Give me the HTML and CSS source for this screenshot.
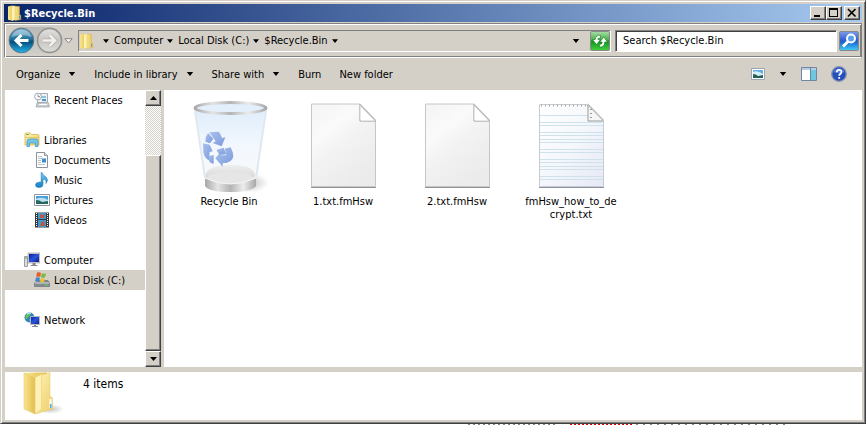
FILE: index.html
```
<!DOCTYPE html>
<html lang="en">
<head>
<meta charset="utf-8">
<title>$Recycle.Bin</title>
<link rel="stylesheet" href="styles.css">
</head>
<body>
<svg class="defs" width="0" height="0" aria-hidden="true">
  <defs>
    <linearGradient id="gold" x1="0" x2="1"><stop offset="0" stop-color="#f8e68e"/><stop offset="1" stop-color="#e2bd4c"/></linearGradient>
    <linearGradient id="goldLight" x1="0" x2="1" y2="1"><stop offset="0" stop-color="#fff3b8"/><stop offset="1" stop-color="#edcf69"/></linearGradient>
    <linearGradient id="paper" x2=".6" y2="1"><stop offset="0" stop-color="#f4f4f4"/><stop offset=".35" stop-color="#fafafa"/><stop offset=".55" stop-color="#f3f3f3"/><stop offset="1" stop-color="#ebebeb"/></linearGradient>
    <linearGradient id="note" x2="1" y2="1"><stop offset="0" stop-color="#fff"/><stop offset=".5" stop-color="#f4f7fb"/><stop offset="1" stop-color="#e6e8f6"/></linearGradient>
    <linearGradient id="metal"><stop offset="0" stop-color="#a8a8a8"/><stop offset=".25" stop-color="#e4e4e4"/><stop offset=".5" stop-color="#b4b4b4"/><stop offset=".75" stop-color="#ececec"/><stop offset="1" stop-color="#a8a8a8"/></linearGradient>
    <linearGradient id="glass" x2="0" y2="1"><stop offset="0" stop-color="#deedfb"/><stop offset=".5" stop-color="#f3f8fe"/><stop offset="1" stop-color="#f8f8f9"/></linearGradient>
    <linearGradient id="floor" x2="0" y2="1"><stop offset="0" stop-color="#ececec"/><stop offset="1" stop-color="#c6c6c6"/></linearGradient>
    <linearGradient id="screen" x2="1" y2="1"><stop offset="0" stop-color="#0a1a9c"/><stop offset=".5" stop-color="#2a55dc"/><stop offset="1" stop-color="#0b1a90"/></linearGradient>
    <linearGradient id="back" x2="0" y2="1"><stop offset="0" stop-color="#7fb5d0"/><stop offset=".45" stop-color="#1f6f9e"/><stop offset=".55" stop-color="#04507f"/><stop offset="1" stop-color="#25b4e8"/></linearGradient>
    <linearGradient id="fwd" x2="0" y2="1"><stop offset="0" stop-color="#e2e1de"/><stop offset=".5" stop-color="#c9c7c2"/><stop offset="1" stop-color="#dedcd8"/></linearGradient>
    <linearGradient id="blue" x2="0" y2="1"><stop offset="0" stop-color="#7ccdf4"/><stop offset="1" stop-color="#147bc2"/></linearGradient>
    <linearGradient id="arrows" x2="1" y2="1"><stop offset="0" stop-color="#a9c0ea"/><stop offset="1" stop-color="#7b9bdc"/></linearGradient>
    <radialGradient id="shade"><stop offset="0" stop-color="#777" stop-opacity=".5"/><stop offset="1" stop-color="#999" stop-opacity="0"/></radialGradient>
    <symbol id="folder" viewBox="0 0 16 16">
      <path d="M1 1.500 5 .5 8 1v14l-3 .8-4-1z" fill="url(#gold)"/>
      <path d="M5 2 8 .6v13.800l-3 1.400z" fill="#fff2b4"/>
      <path d="m8 1.200 4.500.3v7.900l1.300 1.100v4.100l-5.800.9z" fill="url(#gold)" stroke="#d9b74c" stroke-width=".4"/>
      <path d="M12 10.800h1v3h-1z" fill="#4aa3e0"/>
    </symbol>
    <symbol id="caret" viewBox="0 0 8 5"><path d="M0 0h8L4 5z" fill="#000"/></symbol>
    <symbol id="sheet" viewBox="0 0 72 92">
      <path d="M3.500 5h48l16 16.500v66h-64z" fill="url(#paper)" stroke="#c6c6c6"/>
      <path d="M3 88.500h65" stroke="#929292"/>
      <path d="M52 6v16h15.500" fill="#fff" stroke="#999"/>
      <path d="m52.500 6 14.500 15.500h-14.500z" fill="#fff"/>
      <path d="m51.500 5 16 16.500" stroke="#bbb" stroke-width="1.500"/>
    </symbol>
  </defs>
</svg>

<div class="window">
  <header class="titlebar">
    <svg class="i16"><use href="#folder"/></svg>
    <h1>$Recycle.Bin</h1>
    <button class="bevel cap" aria-label="Minimize"><svg viewBox="0 0 12 10"><path d="M2 7h6v2H2z"/></svg></button>
    <button class="bevel cap" aria-label="Maximize"><svg viewBox="0 0 12 10"><path fill-rule="evenodd" d="M1 0h9v9H1zM2 2v6h7V2z"/></svg></button>
    <button class="bevel cap close" aria-label="Close"><svg viewBox="0 0 12 10"><path d="m2 1 7.500 7.500M9.500 1 2 8.500" stroke="#000" stroke-width="1.700"/></svg></button>
  </header>

  <div class="navbar">
    <div class="travel">
      <button aria-label="Back"><svg viewBox="0 0 27 27"><circle cx="13.500" cy="13.500" r="12.300" fill="url(#back)" stroke="#5c7482"/><path d="M3.500 10a10.500 10.500 0 0 1 20 0q-10-4-20 0z" fill="#fff" opacity=".35"/><path d="M20.500 13.500H9M13.500 8 8 13.500l5.500 5.500" fill="none" stroke="#fff" stroke-width="3"/></svg></button>
      <button aria-label="Forward"><svg viewBox="0 0 27 27"><circle cx="13.500" cy="13.500" r="12" fill="url(#fwd)" stroke="#929292" stroke-width="1.500"/><path d="M6.500 13.500H18M13.500 8l5.500 5.500-5.500 5.500" fill="none" stroke="#b2b0ac" stroke-width="4"/><path d="M6.500 13.500H18M13.500 8l5.500 5.500-5.500 5.500" fill="none" stroke="#f1f0ed" stroke-width="2.500"/></svg></button>
    </div>
    <button class="recent" aria-label="Recent pages"><svg viewBox="0 0 9 6"><path d="M.8.7h7.400L4.500 5z" fill="#f4f4f4" stroke="#858585"/></svg></button>
    <nav class="address" aria-label="Address">
      <svg class="i16"><use href="#folder"/></svg>
      <button class="crumb first" aria-label="Root"><svg class="mini"><use href="#caret"/></svg></button>
      <button class="crumb">Computer<svg class="mini"><use href="#caret"/></svg></button>
      <button class="crumb">Local Disk (C:)<svg class="mini"><use href="#caret"/></svg></button>
      <button class="crumb">$Recycle.Bin<svg class="mini"><use href="#caret"/></svg></button>
      <button class="history" aria-label="Previous locations"><svg class="caret"><use href="#caret"/></svg></button>
      <button class="square refresh" aria-label="Refresh"><svg viewBox="0 0 18 16"><path d="M9.500 2.500Q5 1.500 4.200 6.500H1.500l4 5 4-5H6.800q0-2 2.700-1.500zM8.500 14q5 .5 5.300-5h2.700L12.800 4 8.800 9h2.400q0 2.500-2.700 2.500z" fill="#fff" stroke="#0b7a18" stroke-width=".6"/></svg></button>
    </nav>
    <input class="search" type="text" aria-label="Search" value="Search $Recycle.Bin">
    <button class="square find" aria-label="Search"><svg viewBox="0 0 18 18"><circle cx="11" cy="6.500" r="4" fill="#5aa0ee" stroke="#fff" stroke-width="2"/><path d="m8 9.500-5 5" stroke="#fff" stroke-width="3"/></svg></button>
  </div>

  <div class="commands">
    <button>Organize<svg class="caret"><use href="#caret"/></svg></button>
    <button>Include in library<svg class="caret"><use href="#caret"/></svg></button>
    <button>Share with<svg class="caret"><use href="#caret"/></svg></button>
    <button>Burn</button>
    <button>New folder</button>
    <div class="views">
      <button aria-label="Change view"><svg width="14" height="12" viewBox="0 0 14 12"><path d="M.5.500h13v11H.5z" fill="#fff" stroke="#9aa5ad"/><path d="M2 2h10v8H2z" fill="#62aee4"/><path d="M2 4q4-2 10 2v4H2z" fill="#d6eef7"/><path d="M2 6q3 0 5 2l5-1v3H2z" fill="#275f55"/></svg></button>
      <button aria-label="More view options"><svg class="caret"><use href="#caret"/></svg></button>
      <button aria-label="Preview pane"><svg width="16" height="14" viewBox="0 0 16 14"><path d="M.5.500h15v13H.5z" fill="#fff" stroke="#7186a0"/><path d="M1 1h14v2H1z" fill="#b9cde3"/><path d="M10 3h5v10h-5z" fill="#6fc6e0"/><path d="M9.500 1v12" stroke="#5e87a9"/></svg></button>
      <button aria-label="Help"><svg width="16" height="16" viewBox="0 0 16 16"><circle cx="8" cy="8" r="7.300" fill="#2450bd" stroke="#8793ad" stroke-width="1.300"/><path d="M2.500 6a6 6 0 0 1 11 0q-5 2-11 0z" fill="#7b9cea" opacity=".6"/><path d="M5.700 6.300C5.700 3 10.500 3 10.500 6c0 1.700-2.300 1.800-2.300 3.800" fill="none" stroke="#fff" stroke-width="1.700"/><path d="M7.300 11h1.800v1.800H7.300z" fill="#fff"/></svg></button>
    </div>
  </div>

  <div class="body">
    <nav class="tree" aria-label="Folders">
      <a href="#" class="child"><svg viewBox="0 0 16 16"><path d="M3.500 1.500h10v9h-10z" fill="#eef3f7" stroke="#a4adb4"/><path d="M7 4h5v2H7z" fill="#8dc3e0"/><path d="M8 7h4v2H8z" fill="#4c92c4"/><path d="m3 11 11-1 1.500 5H2z" fill="#c8cdd1" stroke="#9ba1a6" stroke-width=".7"/><path d="M5 12h8v1H5z" fill="#fff"/><circle cx="4" cy="4.500" r="3.400" fill="#fff" stroke="#a0a8b0"/><path d="M4 2.500v2.200h2" stroke="#667" fill="none" stroke-width=".8"/></svg>Recent Places</a>
      <a href="#" class="root gap"><svg viewBox="0 0 16 16"><path d="M1 2q0-1 1-1h4l1.500 1.500H14q1 0 1 1V13H1z" fill="url(#goldLight)" stroke="#d8b548" stroke-width=".8"/><path d="M2 2h3v1H2z" fill="#69bd56"/><path d="M1 5.500h14" stroke="#e3c155" stroke-width=".8"/><path d="M3 14.500v-5Q3 7 5 7h7q2 0 2 2v5.500h-2.500V11h-6v3.500z" fill="#76c5e8" stroke="#3695c6" stroke-width=".7"/></svg>Libraries</a>
      <a href="#" class="child"><svg viewBox="0 0 16 16"><path d="M2.500.500h8l3 3v12h-11z" fill="#fff" stroke="#8b949b"/><path d="M10.500.500v3h3" fill="#ddd" stroke="#8b949b"/><path d="M4 4.500h4M4 6.500h4M4 8.500h3M4 10.500h3M4 12.500h7" stroke="#b4c0cc"/><path d="M8 6.500h4v4H8z" fill="#3d8ad0"/></svg>Documents</a>
      <a href="#" class="child"><svg viewBox="0 0 16 16"><path d="M8 .5q1 3 4 4.500 3 3 0 6.500 1-4-3-4.500v5.500q0 3-4 3-3.500 0-3.500-2.500T5 10.200q1.500-.4 2.200 0V.5z" fill="url(#blue)" stroke="#1c7fbe" stroke-width=".6"/></svg>Music</a>
      <a href="#" class="child"><svg viewBox="0 0 16 16"><path d="M.5 2.500h15v11H.5z" fill="#fff" stroke="#8d969c"/><path d="M2 4h12v8H2z" fill="#4a9fd9"/><path d="M2 7q6-3 12 1v4H2z" fill="#b9e1f0"/><path d="M2 8q4 0 6 2l6-1v3H2z" fill="#28685c"/></svg>Pictures</a>
      <a href="#" class="child"><svg viewBox="0 0 16 16"><path d="M1 .5h14v15H1z" fill="#333a40"/><path d="M4 1h8v6H4zM4 8h8v7H4z" fill="#4997ce"/><path d="m6 2 3 1 2-1-1 4H6zM8 9l3 2v3H6z" fill="#b65b43"/><path d="M2.500 1v14M13.500 1v14" stroke="#fff" stroke-width="1" stroke-dasharray="1 1"/></svg>Videos</a>
      <a href="#" class="root gap"><svg viewBox="0 0 16 16"><path d="M.5 4.500h3v10h-3z" fill="#d9dcde" stroke="#878c91" stroke-width=".8"/><path d="M1 6h2" stroke="#4b4" /><path d="M4 1h12v10H4z" fill="#cdcfd0" stroke="#999" stroke-width=".6"/><path d="M5 2h10v8H5z" fill="url(#screen)"/><path d="M8.500 11h3v2h2v1h-7v-1h2z" fill="#888"/></svg>Computer</a>
      <a href="#" class="child selected" aria-current="page"><svg viewBox="0 0 16 16"><path d="m2 10 2-1.500h10L15.500 11v3.500H.5V11z" fill="#858c91" stroke="#62696e" stroke-width=".6"/><path d="M1 11h14" stroke="#d7dcdf"/><path d="M11 12.500h3v1h-3z" fill="#49df4d"/><path d="M3 .6q2-1 4 .3L6.200 5q-2-1.200-4 0z" fill="#e85a27"/><path d="M8 1.300q2 1 4 0L11 5.300q-2 1-4 0z" fill="#79b83a"/><path d="M2 5.700q2-1 4 .2L5 9.500q-2-1.200-4 0z" fill="#3988d2"/><path d="M6.900 6.200q2 1 4 0L10 9.700q-2 1-4 0z" fill="#f5be28"/></svg>Local Disk (C:)</a>
      <a href="#" class="root gap"><svg viewBox="0 0 16 16"><circle cx="5.500" cy="5.500" r="5" fill="#2a83c9"/><path d="M3 1.500q3-1 4 0l-2 3-3 3Q0 5 3 1.500zM5 7l3 1-2 2.500z" fill="#68c04f"/><path d="M3 2.200q2-1.500 4-1" stroke="#d4f2fa" fill="none"/><path d="M6.500 4.500h9v8h-9z" fill="url(#screen)" stroke="#b6b9bc"/><path d="M10 13h2v1h2v1H8v-1h2z" fill="#888"/></svg>Network</a>
    </nav>
    <div class="scrollbar">
      <button class="bevel" aria-label="Scroll up"><svg viewBox="0 0 7 4"><path d="M0 4h7L3.500 0z"/></svg></button>
      <div class="track"></div>
      <div class="bevel thumb"></div>
      <button class="bevel" aria-label="Scroll down"><svg viewBox="0 0 7 4"><path d="M0 0h7L3.500 4z"/></svg></button>
    </div>
    <main class="files">
      <figure>
        <svg viewBox="-2 1 80 97">
          <ellipse cx="58" cy="86" rx="20" ry="10" fill="url(#shade)"/>
          <path d="M3 11 14 84q25 12 50 0L76 11z" fill="url(#glass)"/>
          <path d="M14 79q2-11 26-11t24 11q-4 7-25 7t-25-7z" fill="url(#floor)" opacity=".8"/><ellipse cx="39" cy="81" rx="23" ry="6" fill="#e6e6e6"/>
          <path d="M4 14 14 81M75 14 65 81" stroke="#e1e9f0" stroke-width="2"/>
          <path d="M14 81q25 12 51 0v8q-5 6-26 6t-25-6z" fill="url(#metal)"/>
          <path d="M14 81q25 12 51 0" fill="none" stroke="#f6f6f6"/>
          <ellipse cx="39.500" cy="11" rx="35.500" ry="5.500" fill="#e3f0fc" stroke="url(#metal)" stroke-width="3"/>
          <g transform="translate(-6 -2) scale(.3333)" fill="url(#arrows)">
            <path d="m73 112 28-2q6 6 10 19l10-2-11 27-27-10 9-5q-8-12-19-27z"/>
            <path d="m69 114 16 17-10 14-14-5q0-16 8-26z"/>
            <path d="m54 145 20 4 9 20-9 2-2 25q-14-6-17-24z"/>
            <path d="m72 183 14-3v26q-12-2-14-9z"/>
            <path d="m91 190 15-18v9h18l-5-20 18-4q8 15 8 27-2 20-32 21v10z"/>
            <path d="m94 165 22-7 7 20-19 2z"/>
          </g>
        </svg>
        <figcaption>Recycle Bin</figcaption>
      </figure>
      <figure>
        <svg viewBox="-5 -1 80 97"><use href="#sheet" width="72" height="92"/></svg>
        <figcaption>1.txt.fmHsw</figcaption>
      </figure>
      <figure>
        <svg viewBox="-5 -1 80 97"><use href="#sheet" width="72" height="92"/></svg>
        <figcaption>2.txt.fmHsw</figcaption>
      </figure>
      <figure>
        <svg viewBox="-5 -1 80 97">
          <path d="M3.500 5.500h47l17 17v65h-64z" fill="url(#note)" stroke="#c8ccd2"/>
          <path d="M4 16.500h48M4 23.500h62M4 26.500h63M4 33.500h63M4 36.500h63M4 40.500h63M4 43.500h63M4 50.500h63M4 53.500h63M4 60.500h63M4 63.500h63M4 67.500h63M4 70.500h63M4 77.500h63M4 80.500h63" stroke="#cfe2ec"/>
          <path d="M5 6.500h46" stroke="#a5a5a5" stroke-width="2" stroke-dasharray="1 3"/>
          <path d="M3 88.500h65" stroke="#8993a3"/>
          <path d="m52.500 6 14.500 15.500h-14.500z" fill="#f6f6f6"/>
          <path d="M52 6v16h15.500" fill="none" stroke="#999"/>
          <path d="m51.500 5 16 16.500" stroke="#bbb" stroke-width="1.500"/>
          <path d="M55 10v10" stroke="#999" stroke-width="2" stroke-dasharray="1 3"/>
        </svg>
        <figcaption>fmHsw_how_to_decrypt.txt</figcaption>
      </figure>
    </main>
  </div>

  <footer class="details">
    <svg viewBox="0 0 42 44">
      <ellipse cx="28" cy="37" rx="14" ry="5" fill="url(#shade)"/>
      <path d="M2 1 13 .5h12V38L13 42z" fill="url(#gold)"/>
      <path d="m13 6 7-4 1 36-8 4z" fill="#fff0b4"/>
      <path d="m19.500 3 8.500-2.500V24l2.500 2v11L13 42l6.500-5z" fill="url(#goldLight)" stroke="#e3c870" stroke-width=".5"/>
      <path d="m2 1 11 5v36L2 37z" fill="url(#gold)" stroke="#e6cf7c" stroke-width=".6"/>
      <path d="M27.500 27h2v9h-2z" fill="#fff"/><path d="M28 32h1.500v4H28z" fill="#4caee8"/>
    </svg>
    <p>4 items</p>
  </footer>
</div>
<svg class="behind" height="1" aria-hidden="true"><path d="M468 .5h88" stroke="#888" stroke-dasharray="2 3"/><path d="M570 .5h62" stroke="#e00000" stroke-dasharray="2 2"/><path d="M636 .5h150" stroke="#888" stroke-dasharray="2 5"/></svg>
</body>
</html>
```
FILE: styles.css
```
* { box-sizing: border-box; }

body {
  margin: 0;
  min-height: 100vh;
  display: flex;
  flex-direction: column;
  background: #fff;
  color: #000;
  font: 11px/13px Tahoma, "DejaVu Sans Condensed", "Noto Sans", sans-serif;
}

svg { display: block; flex: none; }
.defs { position: absolute; }

button {
  display: flex;
  align-items: center;
  padding: 0;
  border: 0;
  background: none;
  color: inherit;
  font: inherit;
  white-space: nowrap;
}

.i16 { width: 16px; height: 16px; }
.caret { width: 8px; height: 4px; }
.mini { width: 6px; height: 4px; }

.bevel {
  justify-content: center;
  background: #d4d0c8;
  border: 1px solid;
  border-color: #fff #404040 #404040 #fff;
  box-shadow: inset -1px -1px #808080;
}

.window {
  flex: 1;
  display: flex;
  flex-direction: column;
  padding: 2px;
  background: #d4d0c8;
  border: 1px solid;
  border-color: #d4d0c8 #404040 #404040 #d4d0c8;
  box-shadow: inset 1px 1px #fff, inset -1px -1px #808080;
}

.titlebar {
  display: flex;
  align-items: center;
  height: 18px;
  margin: 1px 1px 0;
  padding: 0 2px 0 3px;
  background: linear-gradient(to right, #0a246a, #a6caf0);
}

.titlebar h1 {
  flex: 1;
  margin: 0 0 0 1px;
  color: #fff;
  font: bold 11px/13px Tahoma, "DejaVu Sans Condensed", "Noto Sans", sans-serif;
}

.cap { width: 16px; height: 14px; }
.cap svg { width: 12px; height: 10px; }
.close { margin-left: 2px; }

.navbar {
  display: flex;
  align-items: center;
  height: 35px;
  margin: 1px 1px 0;
  padding: 0 2px 0 3px;
  border: 1px solid;
  border-color: #808080 #808080 #fff #808080;
  box-shadow: inset 1px 1px #fff, inset -1px -1px #808080;
}

.travel {
  display: flex;
  gap: 1px;
  border-radius: 14px;
  background: linear-gradient(#bbb9b5, #d0cec9);
}

.travel svg { width: 27px; height: 27px; }
.recent { margin: 0 5px 0 1px; }
.recent svg { width: 9px; height: 6px; }

.address {
  flex: 1;
  display: flex;
  align-items: center;
  height: 22px;
  border: 1px solid;
  border-color: #808080 #fff #fff #808080;
}

.crumb { gap: 4px; margin-right: 5px; }
.first { margin-left: 8px; }
.history { margin: 0 10px 0 auto; }

.square {
  justify-content: center;
  width: 20px;
  height: 20px;
  border: 1px solid #898989;
  border-radius: 2px;
}

.refresh { background: linear-gradient(#a5dba2, #43b048 45%, #119222 50%, #42cc3a); }
.refresh svg { width: 18px; height: 16px; }
.find { background: linear-gradient(#7b98e8, #315fd2 45%, #1765cc 55%, #40c9f6); }
.find svg { width: 18px; height: 18px; }

.search {
  width: 222px;
  height: 22px;
  margin: 0 2px 0 4px;
  padding: 0 7px;
  border: 1px solid;
  border-color: #808080 #fff #fff #808080;
  border-radius: 0;
  box-shadow: inset 1px 1px #404040;
  background: #fff;
  color: #000;
  font: inherit;
}

.commands {
  display: flex;
  align-items: center;
  gap: 18px;
  height: 32px;
  padding: 0 16px 0 13px;
}

.commands button { gap: 8px; }
.views { display: flex; align-items: center; gap: 14px; margin-left: auto; }

.body {
  flex: 1;
  display: flex;
  margin: 0 1px 0 2px;
  background: #fff;
}

.tree { width: 140px; padding-bottom: 37px; }

.tree a {
  display: flex;
  align-items: center;
  gap: 4px;
  height: 20px;
  color: inherit;
  text-decoration: none;
}

.tree svg { width: 16px; height: 16px; }
.root { padding-left: 19px; }
.child { padding-left: 29px; }
.gap { margin-top: 20px; }
.selected { background: #d4d0c8; }

.scrollbar { display: flex; flex-direction: column; width: 16px; }
.scrollbar button { height: 16px; }
.scrollbar svg { width: 7px; height: 4px; }
.track { flex: 1; background: repeating-conic-gradient(#d4d0c8 0 25%, #fff 0 50%) 0 0 / 2px 2px; }
.thumb { flex: 4; }

.files {
  flex: 1;
  display: flex;
  flex-wrap: wrap;
  align-content: flex-start;
  padding: 8px;
  border-left: 3px solid #d4d0c8;
}

.files figure { width: 114px; margin: 0; }
.files svg { width: 80px; height: 97px; margin: 0 auto; }

.files figcaption {
  width: 96px;
  margin: 0 auto;
  text-align: center;
  word-break: break-all;
}

.details {
  display: flex;
  height: 48px;
  margin: 5px 1px 1px 2px;
  padding-left: 17px;
  background: #fff;
}

.details svg { width: 42px; height: 44px; }
.details p { margin: 5px 0 0 19px; font-size: 12px; line-height: 14px; }

.behind { width: 100%; height: 1px; }
```
